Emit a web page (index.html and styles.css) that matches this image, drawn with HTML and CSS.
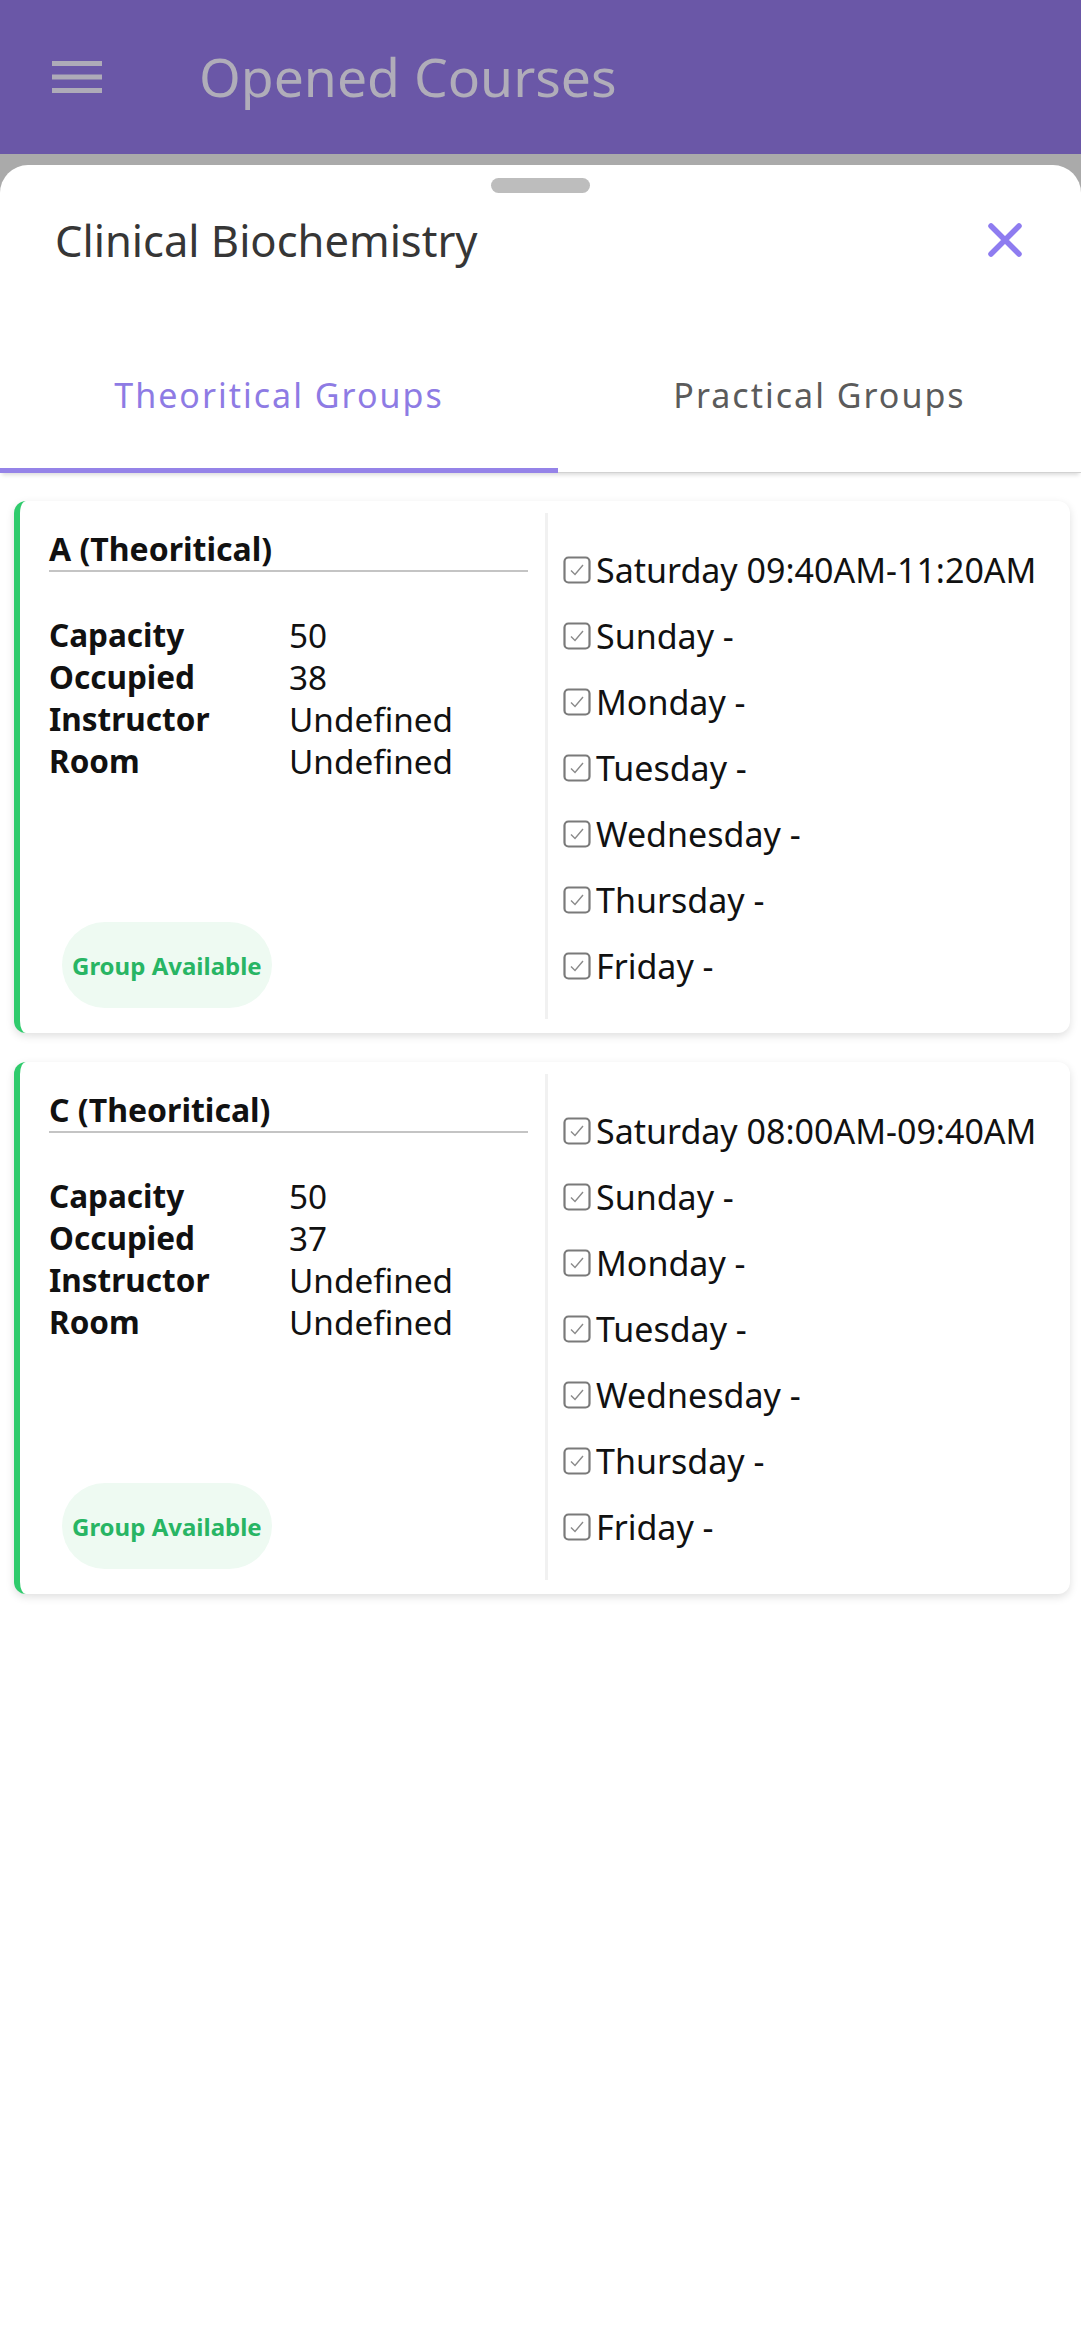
FILE: index.html
```html
<!DOCTYPE html>
<html lang="en">
<head>
<meta charset="utf-8">
<title>Opened Courses</title>
<link rel="stylesheet" href="styles.css">
</head>
<body>
<header class="appbar">
  <svg class="menu" width="50" height="32" viewBox="0 0 50 32"><rect x="0" y="0" width="50" height="5" fill="#aeabb8"/><rect x="0" y="13.5" width="50" height="5" fill="#aeabb8"/><rect x="0" y="27" width="50" height="5" fill="#aeabb8"/></svg>
  <h1 class="appbar-title">Opened Courses</h1>
</header>
<div class="backdrop">
  <section class="sheet">
    <div class="handle"></div>
    <div class="sheet-head">
      <h2 class="course">Clinical Biochemistry</h2>
      <svg class="close" width="36" height="36" viewBox="0 0 36 36"><path d="M4 4 L32 32 M32 4 L4 32" stroke="#8e7cf0" stroke-width="5.5" stroke-linecap="round" fill="none"/></svg>
    </div>
    <nav class="tabs">
      <div class="tab active">Theoritical Groups</div>
      <div class="tab">Practical Groups</div>
    </nav>
    <div class="cards">
      <article class="card">
        <div class="left">
          <h3 class="gtitle">A (Theoritical)</h3>
          <div class="info">
            <span class="lbl">Capacity</span><span class="val">50</span>
            <span class="lbl">Occupied</span><span class="val">38</span>
            <span class="lbl">Instructor</span><span class="val">Undefined</span>
            <span class="lbl">Room</span><span class="val">Undefined</span>
          </div>
          <div class="pill">Group Available</div>
        </div>
        <div class="divider"></div>
        <ul class="days">
          <li><svg class="cb" width="28" height="28" viewBox="0 0 28 28"><rect x="1.5" y="1.5" width="25" height="25" rx="4" fill="none" stroke="#7a7a7a" stroke-width="2.2"/><path d="M8 14.5 L12 18.5 L20 9" fill="none" stroke="#8a8a8a" stroke-width="1.4"/></svg>Saturday 09:40AM-11:20AM</li>
          <li><svg class="cb" width="28" height="28" viewBox="0 0 28 28"><rect x="1.5" y="1.5" width="25" height="25" rx="4" fill="none" stroke="#7a7a7a" stroke-width="2.2"/><path d="M8 14.5 L12 18.5 L20 9" fill="none" stroke="#8a8a8a" stroke-width="1.4"/></svg>Sunday -</li>
          <li><svg class="cb" width="28" height="28" viewBox="0 0 28 28"><rect x="1.5" y="1.5" width="25" height="25" rx="4" fill="none" stroke="#7a7a7a" stroke-width="2.2"/><path d="M8 14.5 L12 18.5 L20 9" fill="none" stroke="#8a8a8a" stroke-width="1.4"/></svg>Monday -</li>
          <li><svg class="cb" width="28" height="28" viewBox="0 0 28 28"><rect x="1.5" y="1.5" width="25" height="25" rx="4" fill="none" stroke="#7a7a7a" stroke-width="2.2"/><path d="M8 14.5 L12 18.5 L20 9" fill="none" stroke="#8a8a8a" stroke-width="1.4"/></svg>Tuesday -</li>
          <li><svg class="cb" width="28" height="28" viewBox="0 0 28 28"><rect x="1.5" y="1.5" width="25" height="25" rx="4" fill="none" stroke="#7a7a7a" stroke-width="2.2"/><path d="M8 14.5 L12 18.5 L20 9" fill="none" stroke="#8a8a8a" stroke-width="1.4"/></svg>Wednesday -</li>
          <li><svg class="cb" width="28" height="28" viewBox="0 0 28 28"><rect x="1.5" y="1.5" width="25" height="25" rx="4" fill="none" stroke="#7a7a7a" stroke-width="2.2"/><path d="M8 14.5 L12 18.5 L20 9" fill="none" stroke="#8a8a8a" stroke-width="1.4"/></svg>Thursday -</li>
          <li><svg class="cb" width="28" height="28" viewBox="0 0 28 28"><rect x="1.5" y="1.5" width="25" height="25" rx="4" fill="none" stroke="#7a7a7a" stroke-width="2.2"/><path d="M8 14.5 L12 18.5 L20 9" fill="none" stroke="#8a8a8a" stroke-width="1.4"/></svg>Friday -</li>
        </ul>
      </article>
      <article class="card">
        <div class="left">
          <h3 class="gtitle">C (Theoritical)</h3>
          <div class="info">
            <span class="lbl">Capacity</span><span class="val">50</span>
            <span class="lbl">Occupied</span><span class="val">37</span>
            <span class="lbl">Instructor</span><span class="val">Undefined</span>
            <span class="lbl">Room</span><span class="val">Undefined</span>
          </div>
          <div class="pill">Group Available</div>
        </div>
        <div class="divider"></div>
        <ul class="days">
          <li><svg class="cb" width="28" height="28" viewBox="0 0 28 28"><rect x="1.5" y="1.5" width="25" height="25" rx="4" fill="none" stroke="#7a7a7a" stroke-width="2.2"/><path d="M8 14.5 L12 18.5 L20 9" fill="none" stroke="#8a8a8a" stroke-width="1.4"/></svg>Saturday 08:00AM-09:40AM</li>
          <li><svg class="cb" width="28" height="28" viewBox="0 0 28 28"><rect x="1.5" y="1.5" width="25" height="25" rx="4" fill="none" stroke="#7a7a7a" stroke-width="2.2"/><path d="M8 14.5 L12 18.5 L20 9" fill="none" stroke="#8a8a8a" stroke-width="1.4"/></svg>Sunday -</li>
          <li><svg class="cb" width="28" height="28" viewBox="0 0 28 28"><rect x="1.5" y="1.5" width="25" height="25" rx="4" fill="none" stroke="#7a7a7a" stroke-width="2.2"/><path d="M8 14.5 L12 18.5 L20 9" fill="none" stroke="#8a8a8a" stroke-width="1.4"/></svg>Monday -</li>
          <li><svg class="cb" width="28" height="28" viewBox="0 0 28 28"><rect x="1.5" y="1.5" width="25" height="25" rx="4" fill="none" stroke="#7a7a7a" stroke-width="2.2"/><path d="M8 14.5 L12 18.5 L20 9" fill="none" stroke="#8a8a8a" stroke-width="1.4"/></svg>Tuesday -</li>
          <li><svg class="cb" width="28" height="28" viewBox="0 0 28 28"><rect x="1.5" y="1.5" width="25" height="25" rx="4" fill="none" stroke="#7a7a7a" stroke-width="2.2"/><path d="M8 14.5 L12 18.5 L20 9" fill="none" stroke="#8a8a8a" stroke-width="1.4"/></svg>Wednesday -</li>
          <li><svg class="cb" width="28" height="28" viewBox="0 0 28 28"><rect x="1.5" y="1.5" width="25" height="25" rx="4" fill="none" stroke="#7a7a7a" stroke-width="2.2"/><path d="M8 14.5 L12 18.5 L20 9" fill="none" stroke="#8a8a8a" stroke-width="1.4"/></svg>Thursday -</li>
          <li><svg class="cb" width="28" height="28" viewBox="0 0 28 28"><rect x="1.5" y="1.5" width="25" height="25" rx="4" fill="none" stroke="#7a7a7a" stroke-width="2.2"/><path d="M8 14.5 L12 18.5 L20 9" fill="none" stroke="#8a8a8a" stroke-width="1.4"/></svg>Friday -</li>
        </ul>
      </article>
    </div>
  </section>
</div>
</body>
</html>
```
FILE: styles.css
```css
* { box-sizing: border-box; }
html, body { margin: 0; padding: 0; }
body {
  font-family: "Noto Sans", "Open Sans", sans-serif;
  background: #fff;
  width: 1081px;
  min-height: 2340px;
  color: #111;
}
.appbar {
  height: 154px;
  background: #6a57a7;
  display: flex;
  align-items: center;
  padding-left: 52px;
}
.menu { display: block; }
.appbar-title {
  margin: 0 0 0 97px;
  font-weight: 400;
  font-size: 53.5px;
  line-height: 1;
  color: #b0adb9;
}
.backdrop {
  background: #aaaaaa;
  padding-top: 11px;
}
.sheet {
  background: #fff;
  border-radius: 28px 28px 0 0;
  min-height: 2175px;
  padding-top: 13px;
}
.handle {
  width: 99px;
  height: 15px;
  border-radius: 8px;
  background: #bdbdbd;
  margin: 0 auto;
}
.sheet-head {
  display: flex;
  align-items: center;
  justify-content: space-between;
  height: 60px;
  margin-top: 17px;
  padding: 0 56px 0 55px;
}
.course {
  margin: 0;
  font-weight: 400;
  font-size: 43.5px;
  line-height: 60px;
  color: #363636;
}
.close { display: block; margin-right: 2px; }
.tabs {
  display: flex;
  margin-top: 60px;
  box-shadow: 0 4px 4px -2px rgba(0,0,0,0.14);
  border-bottom: 1px solid #d2d2d2;
}
.tab {
  font-size: 34px;
  line-height: 44px;
  letter-spacing: 2px;
  text-align: center;
  color: #5b5b5b;
  padding: 43px 0 55px;
  flex: 1;
}
.tab.active {
  flex: 0 0 558px;
  color: #8e7be4;
  padding-bottom: 50px;
  border-bottom: 5px solid #9583e8;
  margin-bottom: -1px;
}
.cards {
  padding: 28px 11px 0 14px;
  display: flex;
  flex-direction: column;
  gap: 29px;
}
.card {
  display: flex;
  background: #fff;
  border-left: 6px solid #2fcb6c;
  border-radius: 12px;
  box-shadow: 0 3px 8px rgba(0,0,0,0.13);
}
.left {
  width: 525px;
  padding: 28px 17px 25px 29px;
  display: flex;
  flex-direction: column;
}
.gtitle {
  margin: 0;
  font-size: 32px;
  line-height: 40px;
  font-weight: 700;
  padding-bottom: 1px;
  border-bottom: 2px solid #c4c4c4;
  color: #111;
}
.info {
  margin-top: 42px;
  display: grid;
  grid-template-columns: 240px 1fr;
  font-size: 31.5px;
  line-height: 42px;
  padding-left: 0;
}
.info span { line-height: 42px; }
.lbl { font-weight: 700; color: #111; }
.val { font-weight: 400; color: #111; font-size: 33.3px; }
.pill {
  margin-top: auto;
  margin-left: 13px;
  align-self: flex-start;
  height: 86px;
  display: flex;
  align-items: center;
  padding: 0 10px;
  border-radius: 43px;
  background: #eefaf2;
  color: #28b564;
  font-weight: 700;
  font-size: 24px;
}
.divider {
  width: 3px;
  background: #f1f1f1;
  margin: 12px 0 14px;
}
.days {
  list-style: none;
  margin: 0;
  padding: 36px 0 34px 15px;
  flex: 1;
}
.days li {
  display: flex;
  align-items: center;
  height: 66px;
  font-size: 34px;
  line-height: 66px;
  color: #111;
  white-space: nowrap;
}
.cb { display: block; margin-right: 5px; flex: none; }
```
